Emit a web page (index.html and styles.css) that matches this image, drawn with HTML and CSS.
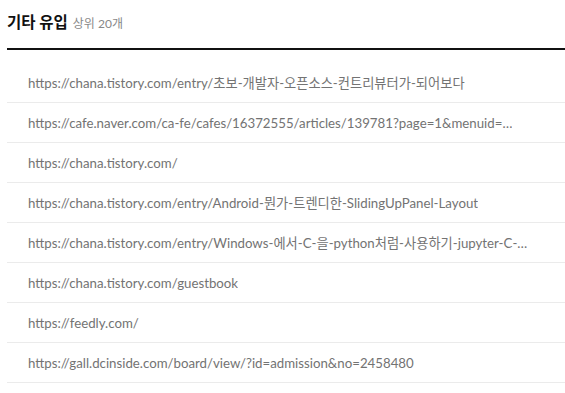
FILE: index.html
```html
<!DOCTYPE html>
<html lang="ko">
<head>
    <meta charset="UTF-8">
    <meta name="viewport" content="width=device-width, initial-scale=1.0">
    <title>기타 유입</title>
    <link rel="stylesheet" href="styles.css">
</head>
<body>
    <div class="panel">
        <div class="panel-head">
            <h2>기타 유입</h2>
            <span class="sub">상위 20개</span>
        </div>
        <ul class="ref-list">
            <li><span class="url">https://chana.tistory.com/entry/초보-개발자-오픈소스-컨트리뷰터가-되어보다</span></li>
            <li><span class="url">https://cafe.naver.com/ca-fe/cafes/16372555/articles/139781?page=1&amp;menuid=…</span></li>
            <li><span class="url">https://chana.tistory.com/</span></li>
            <li><span class="url">https://chana.tistory.com/entry/Android-뭔가-트렌디한-SlidingUpPanel-Layout</span></li>
            <li><span class="url">https://chana.tistory.com/entry/Windows-에서-C-을-python처럼-사용하기-jupyter-C-…</span></li>
            <li><span class="url">https://chana.tistory.com/guestbook</span></li>
            <li><span class="url">https://feedly.com/</span></li>
            <li><span class="url">https://gall.dcinside.com/board/view/?id=admission&amp;no=2458480</span></li>
        </ul>
    </div>
</body>
</html>
```

FILE: styles.css
```css
html {
    overflow: hidden;
}
body {
    margin: 0;
    padding: 0 0 0 7px;
    background: #fff;
    font-family: "Lato", "Noto Sans CJK KR", sans-serif;
}
.panel-head {
    display: flex;
    align-items: baseline;
    gap: 5px;
    height: 50px;
    padding-bottom: 4px;
    border-bottom: 2px solid #111;
    box-sizing: border-box;
    line-height: 44px;
}
.panel-head h2 {
    margin: 0;
    font-size: 15.5px;
    font-weight: bold;
    color: #111;
}
.panel-head .sub {
    font-size: 12px;
    color: #888;
}
.ref-list {
    list-style: none;
    margin: 0;
    padding: 13px 0 0;
}
.ref-list li {
    height: 40px;
    padding: 0 21px;
    display: flex;
    align-items: center;
    border-bottom: 1px solid #ebebeb;
    box-sizing: border-box;
}
.url {
    overflow: hidden;
    white-space: nowrap;
    text-overflow: ellipsis;
    font-size: 13.25px;
    color: #737373;
}
```
